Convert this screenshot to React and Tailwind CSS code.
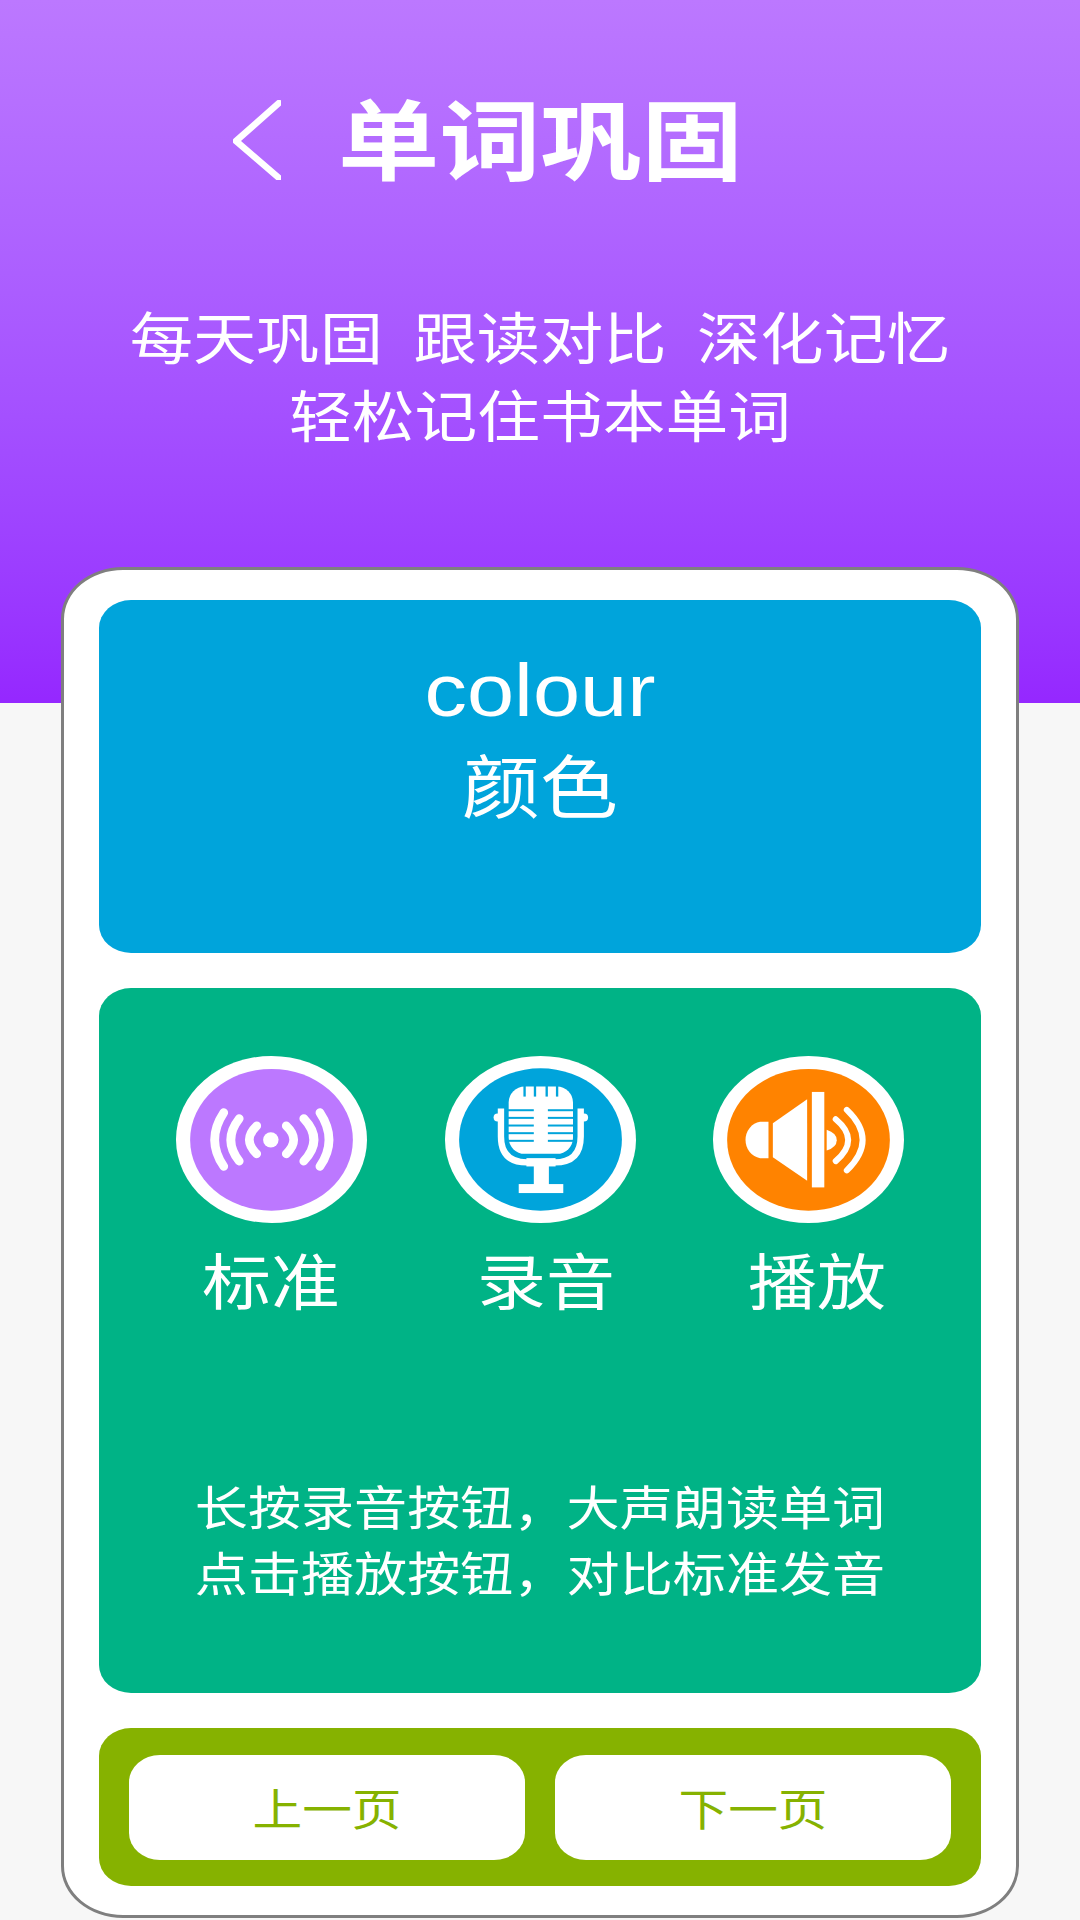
const cjk = "font-['Noto_Sans_CJK_SC','Liberation_Sans',sans-serif]";

function StandardIcon() {
  return (
    <svg viewBox="82 78 568 502" className="h-[167px] w-[191px]" preserveAspectRatio="none">
      <ellipse cx="366" cy="329" rx="284" ry="251" fill="#fff" />
      <ellipse cx="366" cy="330" rx="242" ry="213" fill="#bc78ff" />
      <circle cx="364" cy="330" r="23" fill="#fff" />
      <g fill="none" stroke="#fff" strokeWidth="26" strokeLinecap="round">
        <path d="M322 288Q278 330 322 372" />
        <path d="M270 266Q220 330 270 394" />
        <path d="M224 248Q170 330 224 410" />
        <path d="M410 288Q454 330 410 372" />
        <path d="M462 266Q522 330 462 394" />
        <path d="M510 248Q564 330 510 410" />
      </g>
    </svg>
  );
}

function RecordIcon() {
  return (
    <svg viewBox="15 18 570 502" className="h-[167px] w-[191px]" preserveAspectRatio="none">
      <ellipse cx="300" cy="269" rx="285" ry="251" fill="#fff" />
      <ellipse cx="300" cy="269" rx="243" ry="214" fill="#00a4db" />
      <rect x="205" y="110" width="192" height="202" rx="48" fill="#fff" />
      <g fill="#00a4db">
        <rect x="249" y="108" width="7" height="32" />
        <rect x="280" y="108" width="7" height="32" />
        <rect x="315" y="108" width="7" height="32" />
        <rect x="346" y="108" width="7" height="32" />
        <rect x="203" y="178" width="77" height="6" />
        <rect x="203" y="201" width="77" height="6" />
        <rect x="203" y="224" width="77" height="6" />
        <rect x="203" y="247" width="77" height="6" />
        <rect x="203" y="270" width="77" height="6" />
        <rect x="322" y="178" width="77" height="6" />
        <rect x="322" y="201" width="77" height="6" />
        <rect x="322" y="224" width="77" height="6" />
        <rect x="322" y="247" width="77" height="6" />
        <rect x="322" y="270" width="77" height="6" />
      </g>
      <g fill="none" stroke="#fff" strokeWidth="19">
        <path d="M182 176V260Q182 338 260 338" />
        <path d="M420 176V260Q420 338 342 338" />
      </g>
      <circle cx="172" cy="203" r="12" fill="#fff" />
      <circle cx="430" cy="203" r="12" fill="#fff" />
      <rect x="258" y="325" width="87" height="25" fill="#fff" />
      <rect x="280" y="348" width="45" height="58" fill="#fff" />
      <rect x="235" y="403" width="133" height="27" fill="#fff" />
    </svg>
  );
}

function PlayIcon() {
  return (
    <svg viewBox="100 78 568 502" className="h-[167px] w-[191px]" preserveAspectRatio="none">
      <ellipse cx="384" cy="329" rx="284" ry="251" fill="#fff" />
      <ellipse cx="384" cy="330" rx="242" ry="213" fill="#ff8300" />
      <g fill="#fff">
        <path d="M265 276H240A50 55 0 0 0 240 385H265Z" />
        <path d="M380 208V453L278 382V280Z" />
        <rect x="394" y="186" width="37" height="287" />
        <path d="M438 300Q468 310 468 331Q468 352 438 362Z" />
      </g>
      <g fill="none" stroke="#fff" strokeWidth="18" strokeLinecap="round">
        <path d="M465 268Q539 330 465 394" />
        <path d="M498 240Q592 330 498 422" />
      </g>
    </svg>
  );
}

const tools = [
  { label: '标准', Icon: StandardIcon, labelClass: '' },
  { label: '录音', Icon: RecordIcon, labelClass: 'ml-[13px]' },
  { label: '播放', Icon: PlayIcon, labelClass: 'ml-[18px]' },
];

export default function App() {
  return (
    <div className={`h-[1920px] w-[1080px] overflow-hidden bg-[#f7f7f7] text-white ${cjk}`}>
      <header className="h-[703px] bg-gradient-to-b from-[#bc78ff] to-[#9527ff] pt-[100px]">
        <div className="flex h-[80px] items-center pl-[233px]">
          <svg viewBox="0 0 48 80" className="h-[80px] w-[48px]" fill="none" stroke="#fff" strokeWidth="6.5" strokeLinecap="round" strokeLinejoin="round">
            <path d="M46 3L3 41L46 78" />
          </svg>
          <h1 className="ml-[57px] -translate-y-[5px] origin-left scale-x-[1.15] text-[88px] leading-[90px] font-bold whitespace-nowrap">单词巩固</h1>
        </div>
        <div className="mt-[116px] text-center text-[56px] leading-[78px]">
          <p className="scale-x-[1.13] whitespace-pre">
            每天巩固<span className="ml-[27px]">跟读对比</span><span className="ml-[27px]">深化记忆</span>
          </p>
          <p className="scale-x-[1.12] whitespace-pre">轻松记住书本单词</p>
        </div>
      </header>

      <main className="ml-[61px] -mt-[136px] flex h-[1351px] w-[958px] flex-col gap-[35px] rounded-[62px/52px] border-[3px] border-[#7f7f7f] bg-white px-[35px] pt-[30px]">
        <section className="h-[353px] rounded-[32px/28px] bg-[#00a4db] pt-[45px] text-center">
          <p className="scale-x-[1.13] font-['Liberation_Sans',sans-serif] text-[75px] leading-[90px]">colour</p>
          <p className="scale-x-[1.13] text-[69px] leading-[96px]">颜色</p>
        </section>

        <section className="flex h-[705px] flex-col rounded-[32px/28px] bg-[#00b386] px-[77px] pt-[68px]">
          <div className="flex justify-between">
            {tools.map(({ label, Icon, labelClass }) => (
              <div key={label} className="flex w-[191px] flex-col items-center">
                <Icon />
                <span className={`mt-[16px] scale-x-[1.13] text-[61px] leading-[80px] whitespace-nowrap ${labelClass}`}>{label}</span>
              </div>
            ))}
          </div>
          <div className="mt-[153px] text-center text-[47px] leading-[66px]">
            <p className="scale-x-[1.13] whitespace-nowrap">长按录音按钮，大声朗读单词</p>
            <p className="scale-x-[1.13] whitespace-nowrap">点击播放按钮，对比标准发音</p>
          </div>
        </section>

        <nav className="flex h-[158px] items-center gap-[30px] rounded-[32px/28px] bg-[#86b200] px-[30px] text-[#86b200]">
          <button className="h-[105px] w-[396px] rounded-[31px/27px] bg-white">
            <span className="inline-block scale-x-[1.13] text-[44px]">上一页</span>
          </button>
          <button className="h-[105px] w-[396px] rounded-[31px/27px] bg-white">
            <span className="inline-block scale-x-[1.13] text-[44px]">下一页</span>
          </button>
        </nav>
      </main>
    </div>
  );
}
